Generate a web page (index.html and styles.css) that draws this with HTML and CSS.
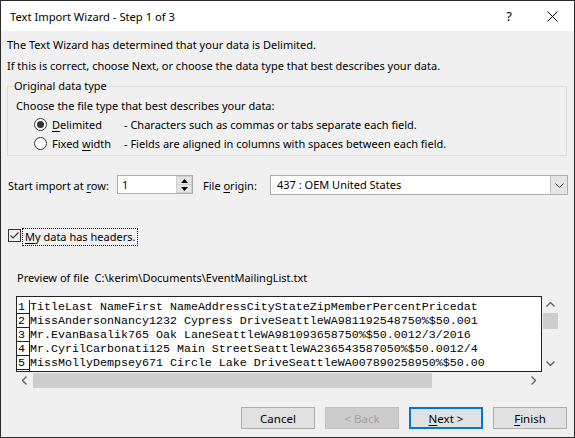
FILE: index.html
```html
<!DOCTYPE html>
<html>
<head>
<meta charset="utf-8">
<link rel="stylesheet" href="styles.css">
</head>
<body>
<div class="window">
  <div class="titlebar">
    <span class="title">Text Import Wizard - Step 1 of 3</span>
    <span class="tb-btn help">?</span>
    <span class="tb-btn close">
      <svg width="11" height="11" viewBox="0 0 11 11"><path d="M0.5 0.5 L10.5 10.5 M10.5 0.5 L0.5 10.5" stroke="#000" stroke-width="1" fill="none"/></svg>
    </span>
  </div>
  <div class="content">
    <p class="line l1">The Text Wizard has determined that your data is Delimited.</p>
    <p class="line l2">If this is correct, choose Next, or choose the data type that best describes your data.</p>
    <fieldset class="group">
      <legend>Original data type</legend>
      <p class="line choose">Choose the file type that best describes your data:</p>
      <div class="radio-row">
        <span class="radio checked"></span>
        <span class="rlabel"><u>D</u>elimited</span>
        <span class="rdesc">- Characters such as commas or tabs separate each field.</span>
      </div>
      <div class="radio-row r2">
        <span class="radio"></span>
        <span class="rlabel">Fixed <u>w</u>idth</span>
        <span class="rdesc">- Fields are aligned in columns with spaces between each field.</span>
      </div>
    </fieldset>
    <div class="import-row">
      <span class="lbl-start">Start import at <u>r</u>ow:</span>
      <div class="spin">
        <span class="spin-val">1</span>
        <div class="spin-btns">
          <span class="sb up"><svg width="7" height="4" viewBox="0 0 7 4"><path d="M0 4 L3.5 0 L7 4 Z" fill="#000"/></svg></span>
          <span class="sb down"><svg width="7" height="4" viewBox="0 0 7 4"><path d="M0 0 L3.5 4 L7 0 Z" fill="#000"/></svg></span>
        </div>
      </div>
      <span class="lbl-origin">File <u>o</u>rigin:</span>
      <div class="combo">
        <span class="combo-val">437 : OEM United States</span>
        <span class="combo-btn"><svg width="9" height="5" viewBox="0 0 9 5"><path d="M0.5 0.5 L4.5 4.5 L8.5 0.5" stroke="#444" stroke-width="1" fill="none"/></svg></span>
      </div>
    </div>
    <div class="check-row">
      <span class="checkbox"><svg width="11" height="11" viewBox="0 0 11 11"><path d="M1.5 5.5 L4 8 L9.5 2.5" stroke="#333" stroke-width="1.2" fill="none"/></svg></span>
      <span class="clabel"><u>M</u>y data has headers.</span>
    </div>
    <p class="line preview-lbl">Preview of file&nbsp; C:\kerim\Documents\EventMailingList.txt</p>
    <div class="preview">
      <div class="pv-top">
        <div class="viewport">
          <div class="prow"><span class="num">1</span><span class="ptext">TitleLast NameFirst NameAddressCityStateZipMemberPercentPricedat</span></div>
          <div class="prow"><span class="num">2</span><span class="ptext">MissAndersonNancy1232 Cypress DriveSeattleWA981192548750%$50.001</span></div>
          <div class="prow"><span class="num">3</span><span class="ptext">Mr.EvanBasalik765 Oak LaneSeattleWA981093658750%$50.0012/3/2016</span></div>
          <div class="prow"><span class="num">4</span><span class="ptext">Mr.CyrilCarbonati125 Main StreetSeattleWA236543587050%$50.0012/4</span></div>
          <div class="prow"><span class="num">5</span><span class="ptext">MissMollyDempsey671 Circle Lake DriveSeattleWA007890258950%$50.00</span></div>
          <div class="prow"><span class="num"></span><span class="ptext"></span></div>
        </div>
        <div class="vscroll">
          <span class="arr"><svg width="9" height="5" viewBox="0 0 9 5"><path d="M0.5 4.5 L4.5 0.5 L8.5 4.5" stroke="#606060" stroke-width="1.3" fill="none"/></svg></span>
          <div class="vtrack"><div class="vthumb"></div></div>
          <span class="arr"><svg width="9" height="5" viewBox="0 0 9 5"><path d="M0.5 0.5 L4.5 4.5 L8.5 0.5" stroke="#606060" stroke-width="1.3" fill="none"/></svg></span>
        </div>
      </div>
      <div class="pv-bottom">
        <div class="hscroll">
          <span class="harr"><svg width="5" height="9" viewBox="0 0 5 9"><path d="M4.5 0.5 L0.5 4.5 L4.5 8.5" stroke="#606060" stroke-width="1.3" fill="none"/></svg></span>
          <div class="htrack"><div class="hthumb"></div></div>
          <span class="harr"><svg width="5" height="9" viewBox="0 0 5 9"><path d="M0.5 0.5 L4.5 4.5 L0.5 8.5" stroke="#606060" stroke-width="1.3" fill="none"/></svg></span>
        </div>
        <div class="corner"></div>
      </div>
    </div>
    <div class="buttons">
      <span class="btn"><span>Cancel</span></span>
      <span class="btn disabled"><span>&lt; Back</span></span>
      <span class="btn default"><span><u>N</u>ext &gt;</span></span>
      <span class="btn"><span><u>F</u>inish</span></span>
    </div>
  </div>
</div>
</body>
</html>
```

FILE: styles.css
```css
* { box-sizing: border-box; }
html, body { margin: 0; padding: 0; }
body {
  font-family: "Noto Sans", "Open Sans", sans-serif;
  font-size: 11px;
  color: #000;
  background: #f0f0f0;
}
u { text-decoration: underline; text-underline-offset: 2px; }

.window {
  width: 575px;
  height: 438px;
  border: 1px solid #2b2b2b;
  background: #f0f0f0;
  display: flex;
  flex-direction: column;
  overflow: hidden;
}

.titlebar {
  height: 30px;
  background: #fff;
  display: flex;
  align-items: center;
  padding-left: 9px;
  flex-shrink: 0;
}
.title { font-size: 11.2px; flex: 1; }
.tb-btn {
  width: 46px;
  height: 30px;
  display: flex;
  align-items: center;
  justify-content: center;
}
.help { font-size: 13px; margin-right: -2px; }
.close { width: 44px; }

.content {
  padding: 0 6px 0 6px;
  display: flex;
  flex-direction: column;
}
.line {
  margin: 0;
  height: 16px;
  line-height: 16px;
  white-space: nowrap;
}
.l1 { margin-top: 6px; }
.l2 { margin-top: 5px; }

.group {
  margin: 4px 0 0 0;
  padding: 0 0 4px 8px;
  border: 1px solid #dcdcdc;
  width: 560px;
  min-width: 0;
}
.group legend {
  padding: 0 1px;
  margin-left: -3px;
  height: 16px;
  line-height: 16px;
}
.choose { margin-top: 4px; }
.radio-row {
  display: flex;
  align-items: center;
  height: 16px;
  margin-top: 2px;
  padding-left: 18px;
  white-space: nowrap;
}
.radio-row.r2 { margin-top: 3px; }
.radio {
  width: 13px;
  height: 13px;
  border: 1px solid #333;
  border-radius: 50%;
  background: #fff;
  display: flex;
  align-items: center;
  justify-content: center;
  flex-shrink: 0;
}
.radio.checked::after {
  content: "";
  width: 7px;
  height: 7px;
  border-radius: 50%;
  background: #333;
}
.rlabel { margin-left: 5px; width: 72px; }

.import-row {
  margin-top: 19px;
  display: flex;
  align-items: center;
  height: 20px;
  padding-left: 1px;
}
.lbl-start { width: 109px; }
.spin {
  width: 76px;
  height: 19px;
  border: 1px solid #adadad;
  background: #fff;
  display: flex;
  align-items: center;
  align-self: flex-start;
}
.spin-val { flex: 1; padding-left: 4px; }
.spin-btns {
  width: 16px;
  height: 17px;
  display: flex;
  flex-direction: column;
}
.sb {
  flex: 1;
  display: flex;
  align-items: center;
  justify-content: center;
  background: #e5e5e5;
  border: 1px solid #cfcfcf;
}
.sb.down { border-top: 0; }
.lbl-origin { margin-left: 10px; width: 67px; }
.combo {
  width: 298px;
  height: 20px;
  border: 1px solid #adadad;
  background: #fff;
  display: flex;
  align-items: stretch;
}
.combo-val { flex: 1; padding-left: 6px; line-height: 18px; }
.combo-btn {
  width: 17px;
  background: #e5e5e5;
  border-left: 1px solid #c4c4c4;
  display: flex;
  align-items: center;
  justify-content: center;
}

.check-row {
  margin-top: 34px;
  display: flex;
  align-items: center;
  height: 16px;
  padding-left: 1px;
}
.checkbox {
  width: 13px;
  height: 13px;
  border: 1px solid #333;
  background: #f0f0f0;
  display: flex;
  align-items: center;
  justify-content: center;
  margin-top: -3px;
}
.clabel {
  margin-left: 2px;
  padding: 0 2px;
  height: 16px;
  line-height: 15px;
  outline: 1px dotted #000;
  outline-offset: 0;
}

.preview-lbl { margin-top: 25px; padding-left: 10px; }

.preview {
  margin-top: 10px;
  margin-left: 9px;
  width: 543px;
  display: flex;
  flex-direction: column;
}
.pv-top { display: flex; height: 76px; }
.viewport {
  width: 526px;
  height: 76px;
  border: 1px solid #222;
  background: #fff;
  overflow: hidden;
  padding-top: 3px;
  font-family: "Liberation Mono", "Courier New", monospace;
  font-size: 11.67px;
}
.prow {
  display: flex;
  height: 14px;
  line-height: 14px;
  white-space: nowrap;
}
.num {
  width: 13px;
  flex-shrink: 0;
  padding-left: 1px;
  border-right: 1px solid #222;
  border-bottom: 1px solid #222;
}

.vscroll {
  width: 17px;
  height: 76px;
  display: flex;
  flex-direction: column;
  align-items: center;
}
.arr {
  height: 17px;
  display: flex;
  align-items: center;
  justify-content: center;
  width: 17px;
}
.vtrack { flex: 1; width: 17px; padding: 0 1px; }
.vthumb { height: 16px; background: #cdcdcd; }

.pv-bottom { display: flex; height: 17px; }
.hscroll {
  width: 526px;
  height: 17px;
  display: flex;
  align-items: center;
}
.harr {
  width: 17px;
  height: 17px;
  display: flex;
  align-items: center;
  justify-content: center;
}
.htrack { flex: 1; height: 15px; }
.hthumb { width: 399px; height: 15px; background: #cdcdcd; }
.corner { width: 17px; }

.buttons {
  margin-top: 18px;
  display: flex;
  justify-content: flex-end;
  gap: 10px;
  padding-right: 1px;
}
.btn {
  width: 74px;
  height: 22px;
  border: 1px solid #adadad;
  background: #e1e1e1;
  display: flex;
  align-items: center;
  justify-content: center;
  font-size: 11.5px;
  white-space: pre;
}
.btn.disabled {
  background: #cccccc;
  border-color: #bfbfbf;
  color: #a0a0a0;
}
.btn.default { border: 2px solid #0078d7; }
```
